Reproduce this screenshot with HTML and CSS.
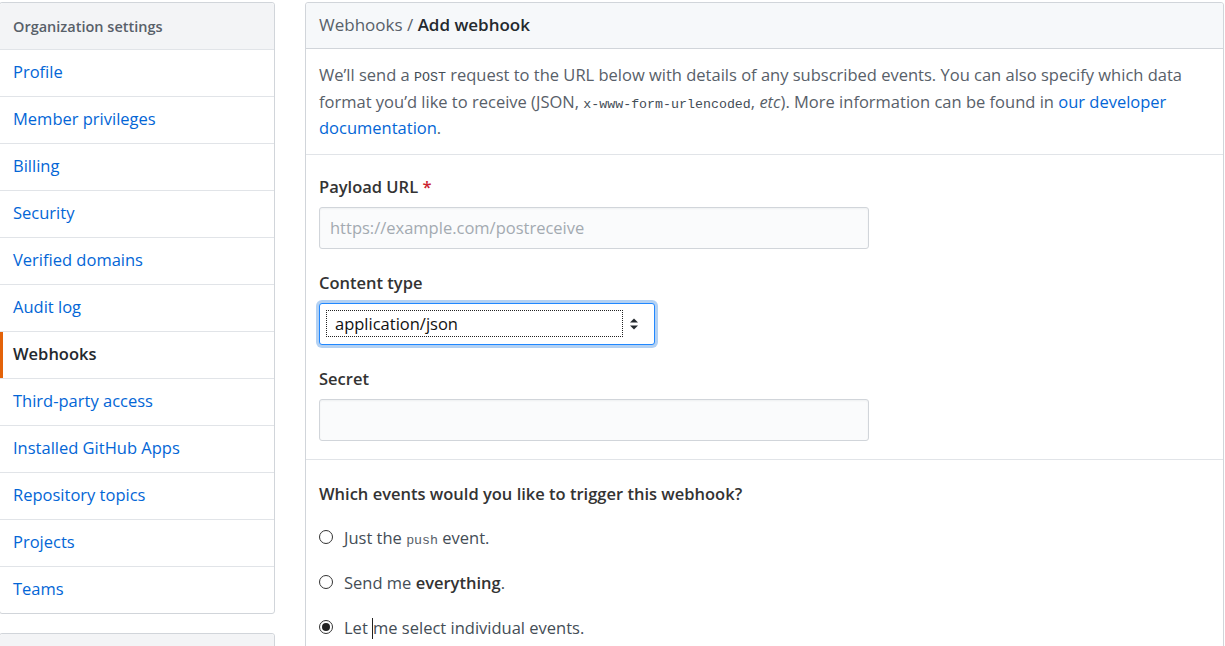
FILE: index.html
```html
<!DOCTYPE html>
<html lang="en">
<head>
<meta charset="utf-8">
<title>Add webhook</title>
<link rel="stylesheet" href="styles.css">
</head>
<body>
<div class="layout">
  <aside class="sidebar">
    <nav class="menu">
      <div class="menu-heading">Organization settings</div>
      <a class="menu-item" href="#">Profile</a>
      <a class="menu-item" href="#">Member privileges</a>
      <a class="menu-item" href="#">Billing</a>
      <a class="menu-item" href="#">Security</a>
      <a class="menu-item" href="#">Verified domains</a>
      <a class="menu-item" href="#">Audit log</a>
      <a class="menu-item selected" href="#">Webhooks</a>
      <a class="menu-item" href="#">Third-party access</a>
      <a class="menu-item" href="#">Installed GitHub Apps</a>
      <a class="menu-item" href="#">Repository topics</a>
      <a class="menu-item" href="#">Projects</a>
      <a class="menu-item" href="#">Teams</a>
    </nav>
    <nav class="menu">
      <div class="menu-heading"></div>
    </nav>
  </aside>

  <main class="box">
    <div class="box-header"><span class="crumb">Webhooks /&nbsp;</span><strong class="crumb-current">Add webhook</strong></div>
    <div class="box-row intro">
      We’ll send a <code>POST</code> request to the URL below with details of any subscribed events. You can also specify which data format you’d like to receive (JSON, <code>x-www-form-urlencoded</code>, <em>etc</em>). More information can be found in <a href="#">our developer documentation</a>.
    </div>
    <div class="box-row form">
      <div class="form-group">
        <label class="label">Payload URL <span class="req">*</span></label>
        <input class="input" type="text" placeholder="https://example.com/postreceive">
      </div>
      <div class="form-group">
        <label class="label">Content type</label>
        <div class="select">
          <span class="select-value">application/json</span>
          <svg class="select-arrows" width="10" height="14" viewBox="0 0 10 14"><path d="M1 5.5 L5 1.5 L9 5.5 Z M1 8.5 L5 12.5 L9 8.5 Z" fill="#24292e"/></svg>
        </div>
      </div>
      <div class="form-group">
        <label class="label">Secret</label>
        <input class="input" type="text">
      </div>
    </div>
    <div class="box-row events">
      <div class="events-title">Which events would you like to trigger this webhook?</div>
      <label class="radio"><span class="radio-dot"></span><span>Just the <code class="small">push</code> event.</span></label>
      <label class="radio"><span class="radio-dot"></span><span>Send me <strong class="strong">everything</strong>.</span></label>
      <label class="radio"><span class="radio-dot checked"></span><span>Let <span class="caret"></span>me select individual events.</span></label>
    </div>
  </main>
</div>
</body>
</html>
```
FILE: styles.css
```css
* { box-sizing: border-box; }
html, body { margin: 0; padding: 0; background: #fff; }
body {
  font-family: "Open Sans", "Noto Sans", sans-serif;
  font-size: 16.5px;
  color: #24292e;
  overflow: hidden;
}
a { color: #0366d6; text-decoration: none; }

.layout {
  display: flex;
  align-items: flex-start;
  gap: 30px;
  padding-top: 2px;
  margin-left: -1px;
}

.sidebar {
  width: 276px;
  flex: none;
  display: flex;
  flex-direction: column;
  gap: 19px;
}
.menu {
  border: 1px solid #d1d5da;
  border-radius: 3px;
  background: #fff;
  display: flex;
  flex-direction: column;
}
.menu-heading {
  height: 46px;
  display: flex;
  align-items: center;
  padding-left: 13px;
  background: #f3f4f6;
  font-size: 14.5px;
  font-weight: 600;
  color: #586069;
  border-radius: 3px 3px 0 0;
}
.menu-item {
  height: 47px;
  display: flex;
  align-items: center;
  padding-left: 13px;
  padding-bottom: 3px;
  border-top: 1px solid #e1e4e8;
  color: #0366d6;
  position: relative;
}
.menu-item.selected {
  color: #24292e;
  font-weight: 600;
}
.menu-item.selected::before {
  content: "";
  position: absolute;
  left: 0; top: 0; bottom: 0;
  width: 3px;
  background: #e36209;
}

.box {
  width: 919px;
  flex: none;
  border: 1px solid #d1d5da;
  border-radius: 3px;
}
.box-header {
  height: 46px;
  display: flex;
  align-items: center;
  padding-left: 13px;
  padding-bottom: 2px;
  background: #f6f8fa;
  border-bottom: 1px solid #d1d5da;
  font-size: 17px;
  color: #586069;
  border-radius: 3px 3px 0 0;
  white-space: nowrap;
}
.crumb { color: #586069; }
.crumb-current { color: #24292e; font-weight: 600; }

.box-row { border-top: 1px solid #e1e4e8; padding: 0 13px; }
.box-header + .box-row { border-top: 0; }

.intro {
  padding-top: 13px;
  padding-bottom: 12px;
  line-height: 26.5px;
  color: #586069;
}
code {
  font-family: "Liberation Mono", "DejaVu Sans Mono", monospace;
  font-size: 13.3px;
  line-height: 1;
  color: #444d56;
}
.intro em { font-style: italic; }

.form {
  padding-top: 18px;
  padding-bottom: 18px;
  display: flex;
  flex-direction: column;
  gap: 20px;
}
.form-group { display: flex; flex-direction: column; gap: 6px; }
.label {
  line-height: 28px;
  font-weight: 600;
  color: #333;
}
.req { color: #cb2431; }
.input {
  width: 550px;
  height: 42px;
  padding: 0 10px;
  font: inherit;
  color: #24292e;
  background: #fafbfc;
  border: 1px solid #d1d5da;
  border-radius: 3px;
  box-shadow: inset 0 1px 2px rgba(27,31,35,0.05);
  outline: none;
}
.input::placeholder { color: #a3aab1; }

.select {
  width: 336px;
  height: 42px;
  display: flex;
  align-items: center;
  justify-content: space-between;
  padding: 0 15px 0 6px;
  border: 1px solid #2188ff;
  border-radius: 3px;
  box-shadow: 0 0 0 3px rgba(3,102,214,0.3);
  background: #fff;
  color: #111;
}
.select-value {
  width: 297px;
  height: 27px;
  display: flex;
  align-items: center;
  padding-left: 8px;
  border: 1px dotted #222;
}
.select-arrows { flex: none; }

.events {
  padding-top: 20px;
  padding-bottom: 10px;
  display: flex;
  flex-direction: column;
}
.events-title {
  line-height: 28px;
  font-weight: 600;
  color: #333;
  margin-bottom: 7px;
}
.radio {
  height: 45px;
  display: flex;
  align-items: center;
  gap: 11px;
  color: #444d56;
}
.radio-dot {
  width: 14px;
  height: 14px;
  border: 1px solid #333;
  border-radius: 50%;
  flex: none;
  display: flex;
  align-items: center;
  justify-content: center;
}
.radio-dot.checked::after {
  content: "";
  width: 8px;
  height: 8px;
  border-radius: 50%;
  background: #222;
}
.small {
  font-family: "Liberation Mono", "DejaVu Sans Mono", monospace;
  font-size: 13.3px;
  color: #586069;
}
.strong { font-weight: 600; color: #333; }
.caret {
  display: inline-block;
  width: 1px;
  height: 21px;
  background: #222;
  vertical-align: -5px;
}
```
